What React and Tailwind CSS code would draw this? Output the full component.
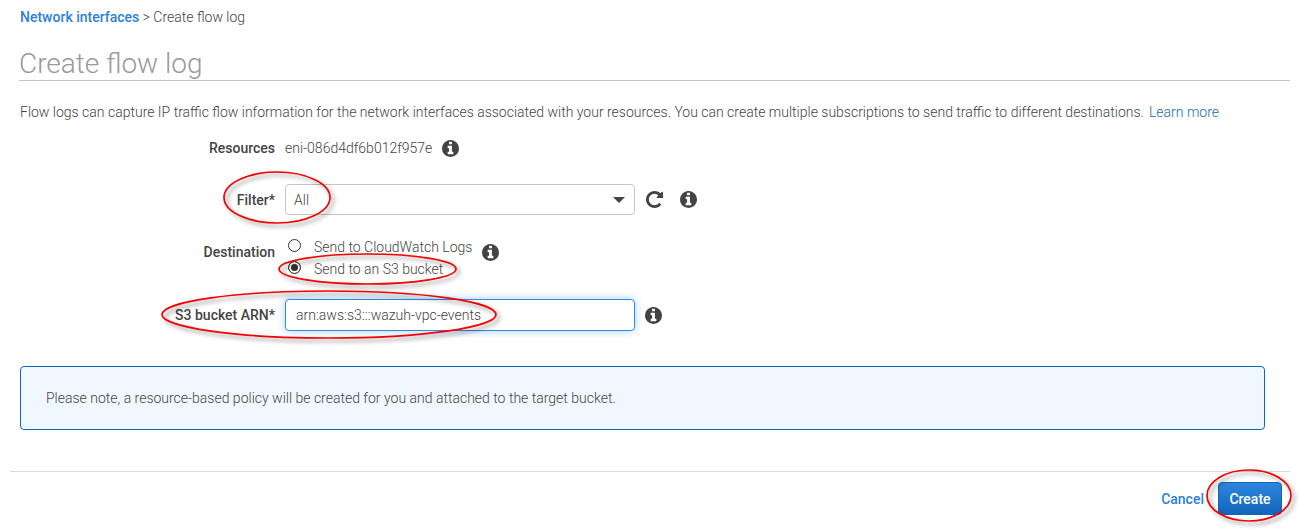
import { useState } from "react";

function InfoIcon() {
  return (
    <svg viewBox="128 128 1536 1536" className="size-[17px] shrink-0 fill-[#444]" aria-hidden="true">
      <path d="M1152 1376v-160q0-14-9-23t-23-9h-96v-512q0-14-9-23t-23-9h-320q-14 0-23 9t-9 23v160q0 14 9 23t23 9h96v320h-96q-14 0-23 9t-9 23v160q0 14 9 23t23 9h448q14 0 23-9t9-23zm-128-896v-160q0-14-9-23t-23-9h-192q-14 0-23 9t-9 23v160q0 14 9 23t23 9h192q14 0 23-9t9-23zm640 416q0 209-103 385.5t-279.5 279.5-385.5 103-385.5-103-279.5-279.5-103-385.5 103-385.5 279.5-279.5 385.5-103 385.5 103 279.5 279.5 103 385.5z" />
    </svg>
  );
}

function InfoButton({ label }) {
  return (
    <button type="button" aria-label={label} className="shrink-0">
      <InfoIcon />
    </button>
  );
}

function RefreshIcon() {
  return (
    <svg viewBox="128 128 1536 1536" className="size-[17px] fill-[#444]" aria-hidden="true">
      <path d="M1664 256v448q0 26-19 45t-45 19h-448q-42 0-59-40-17-39 14-69l138-138q-148-137-349-137-104 0-198.5 40.5t-163.5 109.5-109.5 163.5-40.5 198.5 40.5 198.5 109.5 163.5 163.5 109.5 198.5 40.5q119 0 225-52t179-147q7-10 23-12 15 0 25 9l137 138q9 8 9.5 20.5t-7.5 22.5q-109 132-264 204.5t-327 72.5q-156 0-298-61t-245-164-164-245-61-298 61-298 164-245 245-164 298-61q147 0 284.5 55.5t244.5 156.5l130-129q29-31 70-14 39 17 39 59z" />
    </svg>
  );
}

// Hand-drawn style highlight around a control
function Highlight({ className }) {
  return (
    <svg
      viewBox="0 0 100 100"
      preserveAspectRatio="none"
      className={`pointer-events-none absolute z-10 overflow-visible drop-shadow-[3px_3px_2px_rgba(0,0,0,0.45)] ${className}`}
      aria-hidden="true"
    >
      <ellipse cx="50" cy="50" rx="50" ry="50" fill="none" stroke="#f50000" strokeWidth="1.7" vectorEffect="non-scaling-stroke" />
    </svg>
  );
}

const labelClass = "w-[255px] shrink-0 text-right font-medium text-[#444]";

const radioClass =
  "mr-[13px] mb-[3px] ml-[3px] size-[13px] appearance-none rounded-full border border-[#333] bg-white checked:bg-[#333] checked:shadow-[inset_0_0_0_2px_#fff]";

export default function App() {
  const [filter, setFilter] = useState("All");
  const [destination, setDestination] = useState("s3");
  const [arn, setArn] = useState("arn:aws:s3:::wazuh-vpc-events");

  return (
    <div className="bg-white pr-[17px] pb-4 pl-[10px] font-['Roboto',sans-serif] text-[14px] leading-5 font-light text-[#444]">
      <main className="pt-[7px] pl-[10px]">
        <nav aria-label="Breadcrumb">
          <a href="#interfaces" className="font-medium text-[#2e7fdb]">Network interfaces</a>
          {" > "}
          <span>Create flow log</span>
        </nav>

        <h1 className="mt-[21px] -ml-px border-b border-[#c4c4c4] text-[28px] leading-8 font-light text-[#999]">
          Create flow log
        </h1>

        <p className="mt-[21px]">
          Flow logs can capture IP traffic flow information for the network interfaces associated with your resources.
          You can create multiple subscriptions to send traffic to different destinations.
          <a href="#learn" className="ml-[5px] text-[#146eb4]">Learn more</a>
        </p>

        <form onSubmit={(e) => e.preventDefault()}>
          <div className="mt-4 flex items-center gap-[10px]">
            <span className={labelClass}>Resources</span>
            <span>eni-086d4df6b012f957e</span>
            <InfoButton label="About resources" />
          </div>

          <div className="relative mt-[26px] flex items-center gap-[10px]">
            <label htmlFor="filter" className={labelClass}>Filter*</label>
            <div className="relative w-[350px]">
              <select
                id="filter"
                value={filter}
                onChange={(e) => setFilter(e.target.value)}
                className="block h-[31px] w-full appearance-none rounded-[4px] border border-[#c4c4c4] bg-white px-2 outline-none"
              >
                <option>All</option>
                <option>Accept</option>
                <option>Reject</option>
              </select>
              <svg viewBox="0 0 12 6" className="pointer-events-none absolute top-[13px] right-[10px] h-[6px] w-3 fill-[#444]" aria-hidden="true">
                <path d="M0 0h12L6 6z" />
              </svg>
            </div>
            <button type="button" aria-label="Refresh" className="px-px">
              <RefreshIcon />
            </button>
            <span className="ml-[6px] flex">
              <InfoButton label="About filter" />
            </span>
            <Highlight className="top-[-12px] left-[204px] h-[51px] w-[106px]" />
          </div>

          <div className="mt-[21px] flex items-center gap-[10px]" role="radiogroup" aria-labelledby="destination">
            <span id="destination" className={`${labelClass} mb-3`}>Destination</span>
            <div>
              <label className="flex h-[22px] items-center">
                <input
                  type="radio"
                  name="destination"
                  checked={destination === "cloudwatch"}
                  onChange={() => setDestination("cloudwatch")}
                  className={radioClass}
                />
                Send to CloudWatch Logs
              </label>
              <label className="relative flex h-[22px] items-center">
                <input
                  type="radio"
                  name="destination"
                  checked={destination === "s3"}
                  onChange={() => setDestination("s3")}
                  className={radioClass}
                />
                Send to an S3 bucket
                <Highlight className="top-[-4px] left-[-6px] h-[30px] w-[177px]" />
              </label>
            </div>
            <span className="mb-3 flex">
              <InfoButton label="About destination" />
            </span>
          </div>

          <div className="relative mt-[19px] flex items-center gap-[10px]">
            <label htmlFor="arn" className={labelClass}>S3 bucket ARN*</label>
            <input
              id="arn"
              type="text"
              value={arn}
              onChange={(e) => setArn(e.target.value)}
              className="h-8 w-[350px] rounded-[4px] border border-[#2e8ae6] bg-white px-[10px] shadow-[0_0_8px_rgba(46,138,230,0.4)] outline-none"
            />
            <InfoButton label="About bucket ARN" />
            <Highlight className="top-[-8px] left-[142px] h-[47px] w-[334px]" />
          </div>
        </form>

        <div className="mt-[35px] mr-[25px] rounded-[4px] border border-[#1166bb] bg-[#f0f8ff] px-[25px] py-[21px]">
          Please note, a resource-based policy will be created for you and attached to the target bucket.
        </div>
      </main>

      <footer className="mt-[41px] flex items-center justify-end border-t border-[#d9d9d9] pt-[10px] pr-2 font-medium">
        <a href="#cancel" className="mr-[14px] text-[#2e7fdb]">Cancel</a>
        <div className="relative">
          <button
            type="button"
            className="block h-[33px] w-16 rounded-[4px] border border-[#1166bb] bg-linear-to-b from-[#2e85dd] to-[#1166bb] text-white"
          >
            Create
          </button>
          <Highlight className="top-[-12px] left-[-11px] h-[51px] w-[84px]" />
        </div>
      </footer>
    </div>
  );
}
